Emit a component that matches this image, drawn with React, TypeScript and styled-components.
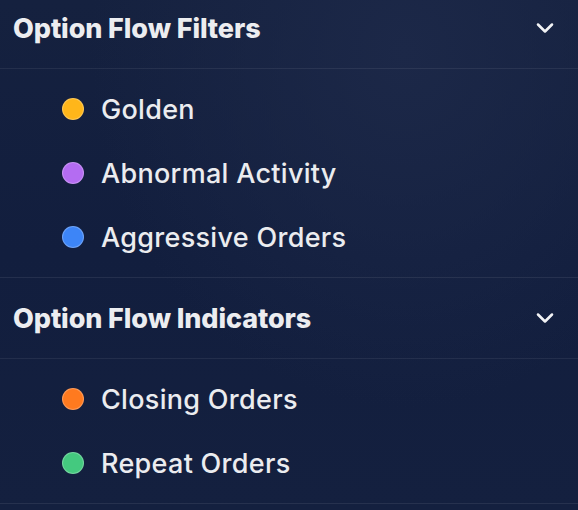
import styled, { createGlobalStyle } from "styled-components";

const GlobalStyle = createGlobalStyle`
  html, body {
    margin: 0;
    padding: 0;
    background: #131f3f;
  }
  body {
    font-family: Inter, "Noto Sans", sans-serif;
    overflow: hidden;
  }
`;

const sections = [
  {
    title: "Option Flow Filters",
    items: [
      { label: "Golden", color: "#ffb61a" },
      { label: "Abnormal Activity", color: "#b46cf2" },
      { label: "Aggressive Orders", color: "#3d85f7" },
    ],
  },
  {
    title: "Option Flow Indicators",
    items: [
      { label: "Closing Orders", color: "#ff7a1f" },
      { label: "Repeat Orders", color: "#44c97f" },
    ],
  },
];

function App() {
  return (
    <>
      <GlobalStyle />
      <Panel>
        {sections.map((section) => (
          <Section key={section.title}>
            <Header>
              <HeaderTitle>{section.title}</HeaderTitle>
              <Chevron viewBox="0 0 24 24">
                <path d="M6 9l6 6 6-6" />
              </Chevron>
            </Header>
            <List>
              {section.items.map((item) => (
                <Item key={item.label}>
                  <Dot color={item.color} />
                  <Label>{item.label}</Label>
                </Item>
              ))}
            </List>
          </Section>
        ))}
      </Panel>
    </>
  );
}

export default App;

const Panel = styled.div`
  width: 578px;
  height: 510px;
  overflow: hidden;
  background: radial-gradient(ellipse at 70% 10%, #1c2848 0%, rgba(28, 40, 72, 0) 55%),
    linear-gradient(180deg, #15213f 0%, #121e3e 50%, #14203f 100%);
  & > section:first-child {
    margin-top: -12px;
  }
`;

const Section = styled.section`
  display: flex;
  flex-direction: column;
  border-bottom: 1px solid rgba(255, 255, 255, 0.08);
`;

const Header = styled.div`
  height: 80px;
  display: flex;
  align-items: center;
  justify-content: space-between;
  padding: 0 19px 0 13px;
  border-bottom: 1px solid rgba(255, 255, 255, 0.07);
`;

const HeaderTitle = styled.h2`
  margin: 0;
  font-size: 27px;
  font-weight: 800;
  letter-spacing: -0.1px;
  color: #ecedf0;
`;

const Chevron = styled.svg`
  width: 28px;
  height: 28px;
  fill: none;
  stroke: #f2f3f5;
  stroke-width: 2.2;
  stroke-linecap: round;
  stroke-linejoin: round;
`;

const List = styled.div`
  display: flex;
  flex-direction: column;
  padding: 8px 0;
`;

const Item = styled.div`
  height: 64px;
  display: flex;
  align-items: center;
  gap: 17px;
  padding-left: 62px;
`;

const Dot = styled.span<{ color: string }>`
  width: 22px;
  height: 22px;
  border-radius: 50%;
  box-sizing: border-box;
  background: ${({ color }) => color};
  border: 1.5px solid rgba(255, 255, 255, 0.25);
  flex-shrink: 0;
`;

const Label = styled.span`
  font-size: 27px;
  font-weight: 500;
  letter-spacing: 0.3px;
  color: #ebecef;
`;
